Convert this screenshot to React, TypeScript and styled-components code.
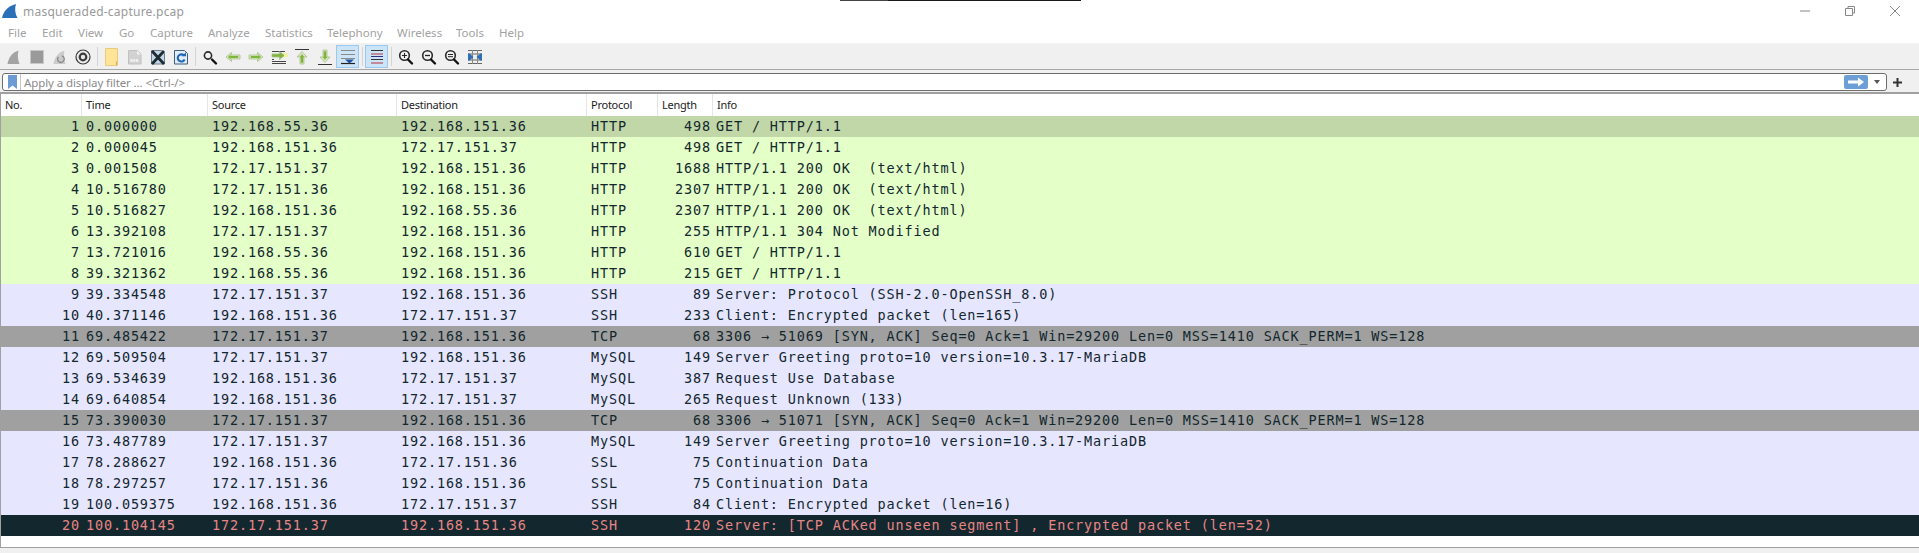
import React from "react";
import styled, { createGlobalStyle } from "styled-components";

const Global = createGlobalStyle`
  html, body { margin: 0; padding: 0; background: #fff; }
  body { width: 1919px; height: 553px; overflow: hidden; font-family: "Noto Sans", "Open Sans", sans-serif; }
`;

const Window = styled.div`
  width: 1919px;
  height: 553px;
  display: flex;
  flex-direction: column;
  background: #f0f0f0;
  overflow: hidden;
  position: relative;
`;
const ScreenEdge = styled.div`
  position: absolute;
  top: 0;
  left: 840px;
  width: 241px;
  height: 1px;
  background: linear-gradient(to right, #444 0, #444 48px, #1a1a1a 48px);
`;
const TitleBar = styled.div`
  height: 22px;
  flex: none;
  display: flex;
  align-items: center;
  background: #fff;
  padding-left: 2px;
`;
const TitleText = styled.span`
  margin-left: 5px;
  font-size: 12px;
  color: #999;
  letter-spacing: 0.23px;
`;
const WindowControls = styled.div`
  margin-left: auto;
  display: flex;
  align-items: center;
  gap: 29px;
  padding-right: 16px;
`;
const MenuBar = styled.div`
  height: 22px;
  flex: none;
  display: flex;
  align-items: center;
  background: #fff;
  border-bottom: 1px solid #f2f2f2;
  box-sizing: border-box;
`;
const MenuItem = styled.span<{ $w: number }>`
  width: ${(p) => p.$w}px;
  padding-left: 8px;
  box-sizing: border-box;
  font-size: 11.5px;
  color: #a2a2a2;
`;
const Toolbar = styled.div`
  height: 26px;
  flex: none;
  display: flex;
  align-items: center;
  padding-left: 2px;
  background: #f0f0f0;
  border-bottom: 1px solid #a8a8a8;
  box-sizing: border-box;
`;
const ToolButton = styled.div<{ $on?: boolean }>`
  width: 23px;
  height: 23px;
  flex: none;
  display: flex;
  align-items: center;
  justify-content: center;
  box-sizing: border-box;
  background: ${(p) => (p.$on ? "#cce4f7" : "transparent")};
  border: 1px solid ${(p) => (p.$on ? "#99c9ef" : "transparent")};
`;
const ToolSep = styled.div`
  width: 6px;
  flex: none;
  height: 19px;
  display: flex;
  justify-content: center;
  &::after {
    content: "";
    width: 1px;
    background: #d4d4d4;
  }
`;
const FilterRow = styled.div`
  height: 22px;
  flex: none;
  display: flex;
  align-items: center;
  background: #f0f0f0;
  padding: 2px 0 0 2px;
  box-sizing: border-box;
`;
const FilterBox = styled.div`
  width: 1885px;
  height: 18px;
  background: #fff;
  border: 1px solid #6e6e6e;
  border-radius: 3px;
  box-sizing: border-box;
  display: flex;
  align-items: center;
`;
const Bookmark = styled.div`
  width: 18px;
  height: 100%;
  flex: none;
  display: flex;
  align-items: center;
  justify-content: center;
  border-right: 1px solid #c4c4c4;
  box-sizing: border-box;
  padding-left: 1px;
`;
const FilterHint = styled.span`
  margin-left: 3px;
  font-size: 11.5px;
  letter-spacing: -0.1px;
  color: #8a8a8a;
`;
const ApplyButton = styled.div`
  margin-left: auto;
  width: 24px;
  height: 14px;
  border-radius: 2px;
  background: #6d9fd6;
  display: flex;
  align-items: center;
  justify-content: center;
`;
const DropArrow = styled.div`
  width: 18px;
  display: flex;
  justify-content: center;
  &::after {
    content: "";
    border-left: 3.5px solid transparent;
    border-right: 3.5px solid transparent;
    border-top: 4px solid #555;
  }
`;
const PlusButton = styled.div`
  width: 20px;
  display: flex;
  justify-content: center;
  align-items: center;
`;
const PacketPanel = styled.div`
  flex: none;
  height: 456px;
  box-sizing: border-box;
  background: #fff;
  border-top: 2px solid #a0a0a0;
  border-left: 1px solid #a0a0a0;
  border-bottom: 1px solid #a0a0a0;
  display: flex;
  flex-direction: column;
`;
const HeaderRow = styled.div`
  height: 22px;
  flex: none;
  display: grid;
  grid-template-columns: 81px 126px 189px 190px 71px 55px 1fr;
  box-sizing: border-box;
`;
const HeaderCell = styled.div`
  font-size: 11px;
  letter-spacing: -0.25px;
  line-height: 21px;
  padding-left: 4px;
  color: #222;
  border-right: 1px solid #e6e6e6;
  box-sizing: border-box;
  &:last-child { border-right: 0; }
`;
const Row = styled.div<{ $bg: string; $fg: string }>`
  height: 21px;
  flex: none;
  display: grid;
  grid-template-columns: 81px 126px 189px 190px 71px 55px 1fr;
  background: ${(p) => p.$bg};
  color: ${(p) => p.$fg};
  font-family: "DejaVu Sans Mono", monospace;
  font-size: 13.5px;
  letter-spacing: 0.85px;
  line-height: 21px;
`;
const Cell = styled.div<{ $right?: boolean }>`
  white-space: pre;
  text-align: ${(p) => (p.$right ? "right" : "left")};
  padding: ${(p) => (p.$right ? "0 2px 0 0" : "0 0 0 4px")};
  overflow: hidden;
`;
const InfoCell = styled(Cell)`
  padding-left: 3px;
`;

const kinds = {
  sel: { bg: "#c2d7a8", fg: "#12272e" },
  http: { bg: "#e4ffc7", fg: "#12272e" },
  ssh: { bg: "#e7e6ff", fg: "#12272e" },
  tcp: { bg: "#a0a0a0", fg: "#12272e" },
  bad: { bg: "#12272e", fg: "#e88585" },
};

type Pkt = [number, string, string, string, string, number, string, keyof typeof kinds];
const packets: Pkt[] = [
  [1, "0.000000", "192.168.55.36", "192.168.151.36", "HTTP", 498, "GET / HTTP/1.1", "sel"],
  [2, "0.000045", "192.168.151.36", "172.17.151.37", "HTTP", 498, "GET / HTTP/1.1", "http"],
  [3, "0.001508", "172.17.151.37", "192.168.151.36", "HTTP", 1688, "HTTP/1.1 200 OK  (text/html)", "http"],
  [4, "10.516780", "172.17.151.36", "192.168.151.36", "HTTP", 2307, "HTTP/1.1 200 OK  (text/html)", "http"],
  [5, "10.516827", "192.168.151.36", "192.168.55.36", "HTTP", 2307, "HTTP/1.1 200 OK  (text/html)", "http"],
  [6, "13.392108", "172.17.151.37", "192.168.151.36", "HTTP", 255, "HTTP/1.1 304 Not Modified", "http"],
  [7, "13.721016", "192.168.55.36", "192.168.151.36", "HTTP", 610, "GET / HTTP/1.1", "http"],
  [8, "39.321362", "192.168.55.36", "192.168.151.36", "HTTP", 215, "GET / HTTP/1.1", "http"],
  [9, "39.334548", "172.17.151.37", "192.168.151.36", "SSH", 89, "Server: Protocol (SSH-2.0-OpenSSH_8.0)", "ssh"],
  [10, "40.371146", "192.168.151.36", "172.17.151.37", "SSH", 233, "Client: Encrypted packet (len=165)", "ssh"],
  [11, "69.485422", "172.17.151.37", "192.168.151.36", "TCP", 68, "3306 → 51069 [SYN, ACK] Seq=0 Ack=1 Win=29200 Len=0 MSS=1410 SACK_PERM=1 WS=128", "tcp"],
  [12, "69.509504", "172.17.151.37", "192.168.151.36", "MySQL", 149, "Server Greeting proto=10 version=10.3.17-MariaDB", "ssh"],
  [13, "69.534639", "192.168.151.36", "172.17.151.37", "MySQL", 387, "Request Use Database", "ssh"],
  [14, "69.640854", "192.168.151.36", "172.17.151.37", "MySQL", 265, "Request Unknown (133)", "ssh"],
  [15, "73.390030", "172.17.151.37", "192.168.151.36", "TCP", 68, "3306 → 51071 [SYN, ACK] Seq=0 Ack=1 Win=29200 Len=0 MSS=1410 SACK_PERM=1 WS=128", "tcp"],
  [16, "73.487789", "172.17.151.37", "192.168.151.36", "MySQL", 149, "Server Greeting proto=10 version=10.3.17-MariaDB", "ssh"],
  [17, "78.288627", "192.168.151.36", "172.17.151.36", "SSL", 75, "Continuation Data", "ssh"],
  [18, "78.297257", "172.17.151.36", "192.168.151.36", "SSL", 75, "Continuation Data", "ssh"],
  [19, "100.059375", "192.168.151.36", "172.17.151.37", "SSH", 84, "Client: Encrypted packet (len=16)", "ssh"],
  [20, "100.104145", "172.17.151.37", "192.168.151.36", "SSH", 120, "Server: [TCP ACKed unseen segment] , Encrypted packet (len=52)", "bad"],
];

const menus: [string, number][] = [
  ["File", 34], ["Edit", 36], ["View", 41], ["Go", 31], ["Capture", 58], ["Analyze", 57],
  ["Statistics", 62], ["Telephony", 70], ["Wireless", 59], ["Tools", 43], ["Help", 40],
];

const Ico: React.FC<{ children: React.ReactNode }> = ({ children }) => (
  <svg width={20} height={20} viewBox="0 0 20 20" fill="none">{children}</svg>
);

const Glass: React.FC<{ mark?: "plus" | "minus" | "eq" | "none" }> = ({ mark = "none" }) => (
  <Ico>
    <circle cx={mark === "none" ? 8 : 8.5} cy="8.5" r={mark === "none" ? 3.6 : 4.8} fill="#f2f2f2" stroke="#2a2a2a" strokeWidth="1.6" />
    <path d="M12 12.5l4 4" stroke="#111" strokeWidth="2.4" strokeLinecap="round" />
    {mark === "plus" && <path d="M6 8.500h5M8.500 6v5" stroke="#222" strokeWidth="1.1" />}
    {mark === "minus" && <path d="M6 8.500h5" stroke="#222" strokeWidth="1.3" />}
    {mark === "eq" && <path d="M6 7.500h5M6 9.700h5" stroke="#222" strokeWidth="1" />}
  </Ico>
);

const arrowFill = "#7fb53a";
const arrowEdge = "#d9e8c4";
const arrowLine = "#a8bf8c";
const toolIcons = {
  fin: (
    <Ico><path d="M3.500 17C4.500 11 8 5.500 14.500 3.500c-1 4-1 9 1 13.500z" fill="#a4a4a4" /></Ico>
  ),
  stop: (
    <Ico><rect x="3.500" y="3.500" width="13" height="13" fill="#9a9a9a" stroke="#c8c8c8" /></Ico>
  ),
  restart: (
    <Ico>
      <path d="M3.500 17C4.500 11 8 5.500 14.500 3.500c-1 4-1 9 1 13.500z" fill="#cbcbcb" />
      <path d="M12 9a3.300 3.300 0 1 1-3.600 1" stroke="#8d8d8d" strokeWidth="1.4" />
    </Ico>
  ),
  options: (
    <Ico>
      <circle cx="10" cy="10" r="7" fill="#ececec" stroke="#3a3a3a" strokeWidth="1.2" />
      <circle cx="10" cy="10" r="4.400" fill="#3a3a3a" />
      <circle cx="10" cy="10" r="2.200" fill="#e8e8e8" />
    </Ico>
  ),
  open: (
    <svg width="15" height="20" viewBox="0 0 15 20" fill="none">
      <path d="M1.500 1.500h12v17h-12z" fill="#ffe49a" stroke="#eccb78" />
      <path d="M12.500 14.500v3.500" stroke="#d9aa4a" />
    </svg>
  ),
  save: (
    <Ico>
      <path d="M3.500 3.500h9l3.500 3.500v10H3.500z" fill="#d2d2d2" stroke="#c0c0c0" />
      <path d="M12 3.500v4h4z" fill="#f2f2f2" />
      <path d="M5.500 13.500h8.500" stroke="#f6f6f6" strokeWidth="2.500" strokeDasharray="2 .8" />
    </Ico>
  ),
  close: (
    <Ico>
      <path d="M3.500 3.500h10l3 3v10.500h-13z" fill="#c4d8e8" stroke="#6d7f8a" />
      <path d="M4 4l12 13M16 4L4 17" stroke="#1d2b33" strokeWidth="2.800" />
    </Ico>
  ),
  reload: (
    <Ico>
      <path d="M3.500 3.500h10l3 3v10.500h-13z" fill="#e2ecf6" stroke="#3f5e80" />
      <path d="M13 8.500A3.600 3.600 0 1 0 13.600 12.500" stroke="#1f68b8" strokeWidth="2.100" />
      <path d="M10.800 9.200h4.200V5.200z" fill="#1f68b8" />
    </Ico>
  ),
  back: (
    <Ico>
      <path d="M3 10l5.500-4.500V8H17v4H8.500v2.500z" fill={arrowEdge} stroke={arrowLine} strokeWidth=".8" />
      <path d="M5.500 10l2-1.600V9.500H15v1H7.500v1.100z" fill={arrowFill} stroke={arrowFill} />
    </Ico>
  ),
  fwd: (
    <Ico>
      <path d="M17 10l-5.500-4.500V8H3v4h8.500v2.500z" fill={arrowEdge} stroke={arrowLine} strokeWidth=".8" />
      <path d="M14.500 10l-2-1.600V9.500H5v1h7.500v1.100z" fill={arrowFill} stroke={arrowFill} />
    </Ico>
  ),
  goto: (
    <Ico>
      <path d="M3 4.500h13M3 12.500h2M3 14.500h14M3 16.500h14" stroke="#333" strokeWidth=".9" />
      <path d="M3 7h7.500V4.500l5 4-5 4V10H3z" fill={arrowFill} stroke={arrowLine} strokeWidth=".8" />
      <rect x="15" y="6" width="4" height="4" fill="#f3f0a0" />
    </Ico>
  ),
  first: (
    <Ico>
      <path d="M3 2.500h14" stroke="#333" />
      <path d="M10 4.500l5 5.500h-3v7H8v-7H5z" fill={arrowEdge} stroke={arrowLine} strokeWidth=".8" />
      <path d="M10 7.500l2 2.500h-1v5.500H9V10H8z" fill={arrowFill} stroke={arrowFill} strokeWidth=".5" />
    </Ico>
  ),
  last: (
    <Ico>
      <path d="M3 17.500h14" stroke="#333" />
      <path d="M10 15.500l5-5.500h-3V3H8v7H5z" fill={arrowEdge} stroke={arrowLine} strokeWidth=".8" />
      <path d="M10 12.500l2-2.500h-1V4.500H9V10H8z" fill={arrowFill} stroke={arrowFill} strokeWidth=".5" />
    </Ico>
  ),
  autoscroll: (
    <Ico>
      <path d="M3 3.500h14M3 7.500h14M3 11.500h14" stroke="#8a8a8a" strokeWidth="1" />
      <path d="M3 16.500h14" stroke="#222" strokeWidth="1.200" />
      <path d="M7 12.500h9l-4.500 4z" fill="#1f4fa0" />
    </Ico>
  ),
  colorize: (
    <Ico>
      <path d="M4 3.500h12M4 12.500h12" stroke="#333" strokeWidth="1" />
      <path d="M4 7h12M4 16h12" stroke="#b83040" strokeWidth="1.100" />
      <path d="M4 9.500h12" stroke="#30308a" strokeWidth="1" />
    </Ico>
  ),
  resize: (
    <Ico>
      <path d="M3 3.500h14M3 16.500h14M3 7h14M3 13h14" stroke="#666" strokeWidth="1" />
      <path d="M7.500 3v14M12.500 3v14" stroke="#888" strokeWidth="1" />
      <path d="M3 6.500h1.500L8.500 10l-4 3.500H3zM17 6.500h-1.500L11.500 10l4 3.500H17z" fill="#2d6eb5" />
    </Ico>
  ),
};

type Tool = keyof typeof toolIcons;
const Tools: React.FC = () => {
  const btn = (k: Tool, on?: boolean) => <ToolButton key={k} $on={on}>{toolIcons[k]}</ToolButton>;
  const glass = (m: "plus" | "minus" | "eq" | "none") => <ToolButton key={m}><Glass mark={m} /></ToolButton>;
  return (
    <Toolbar>
      {btn("fin")}{btn("stop")}{btn("restart")}{btn("options")}
      <ToolSep />
      {btn("open")}{btn("save")}{btn("close")}{btn("reload")}
      <ToolSep />
      {glass("none")}{btn("back")}{btn("fwd")}{btn("goto")}{btn("first")}{btn("last")}{btn("autoscroll", true)}
      <ToolSep />
      {btn("colorize", true)}
      <ToolSep />
      {glass("plus")}{glass("minus")}{glass("eq")}{btn("resize")}
    </Toolbar>
  );
};

export default function App() {
  return (
    <Window>
      <Global />
      <ScreenEdge />
      <TitleBar>
        <svg width="16" height="16" viewBox="0 0 16 16">
          <path d="M0 15C1.500 8 6 3 14 1c-1.500 4-1 10 1.500 14z" fill="#2a6fb8" />
        </svg>
        <TitleText>masqueraded-capture.pcap</TitleText>
        <WindowControls>
          <svg width="16" height="16" viewBox="0 0 16 16"><path d="M3 8h10" stroke="#888" /></svg>
          <svg width="16" height="16" viewBox="0 0 16 16" fill="none"><path d="M3.500 5.500h7v7h-7zM6 5V3.500h6.500V10H11" stroke="#888" /></svg>
          <svg width="16" height="16" viewBox="0 0 16 16"><path d="M3 3l10 10M13 3L3 13" stroke="#888" /></svg>
        </WindowControls>
      </TitleBar>
      <MenuBar>
        {menus.map(([m, w]) => <MenuItem key={m} $w={w}>{m}</MenuItem>)}
      </MenuBar>
      <Tools />
      <FilterRow>
        <FilterBox>
          <Bookmark>
            <svg width="9" height="14" viewBox="0 0 9 14"><path d="M0 0h9v14L4.500 10.500 0 14z" fill="#6c9bd4" /></svg>
          </Bookmark>
          <FilterHint>Apply a display filter ... &lt;Ctrl-/&gt;</FilterHint>
          <ApplyButton>
            <svg width="18" height="10" viewBox="0 0 18 10"><path d="M1 3.500h10V.5L17 5l-6 4.500v-3H1z" fill="#fff" /></svg>
          </ApplyButton>
          <DropArrow />
        </FilterBox>
        <PlusButton>
          <svg width="9" height="9" viewBox="0 0 9 9"><path d="M4.500 0v9M0 4.500h9" stroke="#333" strokeWidth="2" /></svg>
        </PlusButton>
      </FilterRow>
      <PacketPanel>
        <HeaderRow>
          {["No.", "Time", "Source", "Destination", "Protocol", "Length", "Info"].map((h) => (
            <HeaderCell key={h}>{h}</HeaderCell>
          ))}
        </HeaderRow>
        {packets.map((p) => {
          const k = kinds[p[7]];
          return (
            <Row key={p[0]} $bg={k.bg} $fg={k.fg}>
              <Cell $right>{p[0]}</Cell>
              <Cell>{p[1]}</Cell>
              <Cell>{p[2]}</Cell>
              <Cell>{p[3]}</Cell>
              <Cell>{p[4]}</Cell>
              <Cell $right>{p[5]}</Cell>
              <InfoCell>{p[6]}</InfoCell>
            </Row>
          );
        })}
      </PacketPanel>
    </Window>
  );
}
